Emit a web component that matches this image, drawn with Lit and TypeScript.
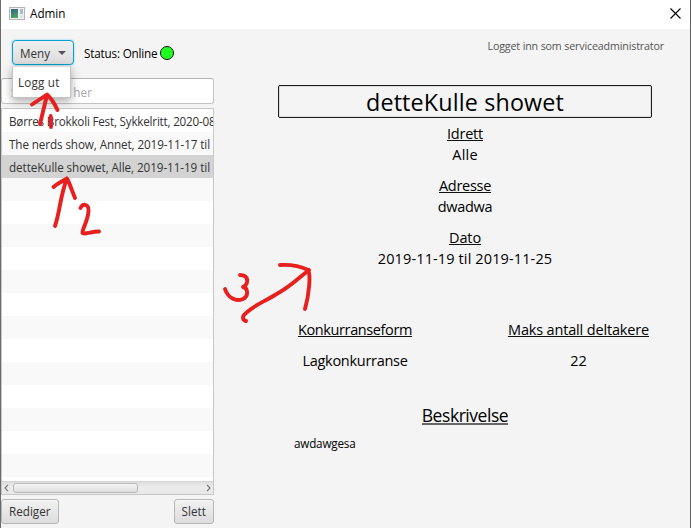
import { LitElement, html, css } from "lit";
import { customElement, property } from "lit/decorators.js";

/* A single line of text whose tracking is adjusted to fill a given width. */
@customElement("fit-label")
class FitLabel extends LitElement {
  @property({ type: Number }) w = 0;
  @property() text = "";
  static styles = css`
    :host { display: block; white-space: pre; flex: none; }
    .t { display: inline-block; vertical-align: top; }
  `;
  updated() {
    const t = this.renderRoot.querySelector(".t") as HTMLElement;
    t.style.letterSpacing = "0px";
    const natural = t.getBoundingClientRect().width;
    t.style.letterSpacing = (this.w - natural) / this.text.length + "px";
  }
  render() {
    return html`<span class="t">${this.text}</span>`;
  }
}

const rows = [
  { text: "Børres Brokkoli Fest, Sykkelritt, 2020-08", w: 206.5 },
  { text: "The nerds show, Annet, 2019-11-17 til", w: 201 },
  { text: "detteKulle showet, Alle, 2019-11-19 til", w: 201, selected: true },
  ...Array.from({ length: 14 }, () => ({ text: "", w: 0 })),
] as { text: string; w: number; selected?: boolean }[];

const facts = [
  { name: "Idrett", nw: 36, value: "Alle", vw: 25.5 },
  { name: "Adresse", nw: 52, value: "dwadwa", vw: 54.5 },
  { name: "Dato", nw: 32, value: "2019-11-19 til 2019-11-25", vw: 174.5 },
];

@customElement("app-root")
class AppRoot extends LitElement {
  static styles = css`
    :host {
      display: block; position: relative; width: 691px; height: 528px; overflow: hidden;
      font-family: "Open Sans", "Noto Sans", sans-serif; font-size: 11.7px; color: #333;
      background: #f4f4f4;
    }
    * { box-sizing: border-box; }
    .window { display: flex; flex-direction: column; height: 528px; border-left: 1px solid #6b6b6b; border-right: 1px solid #5e5e5e; }
    .titlebar { height: 29px; flex: none; background: #fff; display: flex; align-items: center; padding: 0 9px 2px 8px; color: #000; line-height: 18px; }
    .titlebar svg { display: block; }
    .titlebar fit-label { margin: -1px 0 0 5px; }
    .close { margin-left: auto; }
    .body { display: flex; flex: 1; min-height: 0; }
    .left { width: 213px; display: flex; flex-direction: column; }
    .toolbar { height: 49px; flex: none; padding: 11px 0 0 11px; display: flex; align-items: flex-start; }
    .menu { position: relative; width: 62px; height: 25px; border: 1.5px solid #0a9fd1; border-radius: 4px; background: linear-gradient(#f0f0f0, #dcdcdc); display: flex; align-items: center; padding: 0 0 0 7px; box-shadow: 0 0 2px #5fbde0; }
    .caret { margin-left: 8px; border: 4px solid transparent; border-top-color: #555; border-bottom: 0; }
    .popup { position: absolute; z-index: 2; left: -1px; top: 25px; width: 59px; height: 32px; background: #fff; border: 1px solid #c2c2c2; border-top-color: #ddd; padding: 7px 0 0 5px; line-height: 17px; box-shadow: 0 3px 9px rgba(0,0,0,.35); }
    .status { margin: 5px 0 0 10px; line-height: 17px; color: #000; }
    .dot { width: 14px; height: 14px; margin: 6px 0 0 2.500px; border-radius: 50%; background: #1fff1f; border: 1px solid #111; }
    .search { height: 26px; flex: none; background: #fff; border: 1px solid #c3c3c3; border-top-color: #b5b5b5; border-radius: 3px; padding: 4px 9px; line-height: 18px; color: #aaa; }
    .list { margin-top: 4px; height: 387px; flex: none; border: 1px solid #c8c8c8; background: #fff; overflow: hidden; display: flex; flex-direction: column; }
    .rows { height: 372px; overflow: hidden; }
    .row { height: 23px; padding: 3px 0 0 7px; line-height: 18px; }
    .row:nth-child(even) { background: #f9f9f9; }
    .row.selected { background: #d3d3d3; }
    .scroll { flex: 1; display: flex; align-items: center; border-top: 1px solid #d5d5d5; background: linear-gradient(#dedede, #ebebeb 40%, #e8e8e8); padding: 0 2px; }
    .thumb { width: 125px; height: 10px; margin: 0 auto 0 4px; border: 1px solid #b9b9b9; border-radius: 3px; background: linear-gradient(#f4f4f4, #dedede); }
    .buttons { display: flex; justify-content: space-between; padding-top: 4px; }
    .btn { height: 25px; border: 1px solid #b6b6b6; border-radius: 3px; background: linear-gradient(#f2f2f2, #dcdcdc); box-shadow: inset 0 1px #fafafa; padding: 3px 7px; line-height: 17px; }
    .right { flex: 1; display: flex; flex-direction: column; align-items: center; color: #000; font-size: 14.5px; line-height: 20px; }
    .login { align-self: flex-end; margin: 9px 26px 0 0; height: 16px; font-size: 10.7px; line-height: 16px; color: #555; }
    .title { width: 374px; height: 33px; margin: 31px 0 0 26px; border: 1px solid #1d1d1d; border-radius: 2px; box-shadow: inset 0 0 0 1px #ddd; display: flex; justify-content: center; line-height: 32px; font-size: 23.3px; }
    .facts { margin: 6px 0 0 26px; display: flex; flex-direction: column; gap: 10px; }
    .fact { display: flex; flex-direction: column; align-items: center; }
    .fact fit-label { height: 21px; }
    .u { display: flex; height: 21px; position: relative; }
    .u::after { content: ""; position: absolute; left: 0; right: 0; top: 16px; height: 1px; background: #111; }
    .cols { width: 374px; margin: 50px 0 0 26px; display: grid; grid-template-columns: 154px 147px; justify-content: space-between; }
    .cols > div { display: flex; flex-direction: column; align-items: center; gap: 10px; }
    .desc { margin: 32px 0 0 26px; font-size: 17.5px; line-height: 24px; height: 26px; }
    .desc.u::after { top: 20px; height: 2px; background: #666; }
    .note { align-self: flex-start; margin: 5px 0 0 80px; font-size: 11.7px; line-height: 18px; }
    .ink { position: absolute; inset: 0; z-index: 3; pointer-events: none; fill: none; stroke: #e81f1f; stroke-width: 3.9; stroke-linecap: round; stroke-linejoin: round; }
  `;
  render() {
    return html`
      <div class="window">
        <div class="titlebar">
          <svg width="16" height="13" viewBox="0 0 16 13">
            <defs><linearGradient id="g" x2=".4" y2="1"><stop stop-color="#315f86"/><stop offset="1" stop-color="#4ea267"/></linearGradient></defs>
            <rect x=".5" y=".5" width="15" height="12" fill="#f1f1f1" stroke="#b0b4b8"/>
            <rect x="2" y="2" width="7" height="9" fill="url(#g)"/>
            <rect x="11" y="2" width="3" height="5" fill="#a9bccb"/><rect x="11" y="8" width="3" height="3" fill="#dde2e6"/>
          </svg>
          <fit-label .w=${35.5} text="Admin"></fit-label>
          <svg class="close" width="11" height="11" viewBox="0 0 11 11"><path d="M.5.5l10 10M10.5.5l-10 10" stroke="#000" stroke-width="1.1"/></svg>
        </div>
        <div class="body">
          <div class="left">
            <div class="toolbar">
              <div class="menu">
                <fit-label .w=${30} text="Meny"></fit-label><span class="caret"></span>
                <div class="popup"><fit-label .w=${41.5} text="Logg ut"></fit-label></div>
              </div>
              <fit-label class="status" .w=${73.5} text="Status: Online"></fit-label>
              <span class="dot"></span>
            </div>
            <div class="search"><fit-label .w=${81} text="Søk i listen her"></fit-label></div>
            <div class="list">
              <div class="rows">
                ${rows.map((r) => html`<div class="row ${r.selected ? "selected" : ""}">${r.text ? html`<fit-label .w=${r.w} .text=${r.text}></fit-label>` : ""}</div>`)}
              </div>
              <div class="scroll">
                <svg width="5" height="8" viewBox="0 0 5 8"><path d="M4 .8L1 4l3 3.2" fill="none" stroke="#777" stroke-width="1.2"/></svg>
                <span class="thumb"></span>
                <svg width="5" height="8" viewBox="0 0 5 8"><path d="M1 .8L4 4 1 7.2" fill="none" stroke="#777" stroke-width="1.2"/></svg>
              </div>
            </div>
            <div class="buttons">
              <div class="btn"><fit-label .w=${41.5} text="Rediger"></fit-label></div>
              <div class="btn"><fit-label .w=${24.5} text="Slett"></fit-label></div>
            </div>
          </div>
          <div class="right">
            <fit-label class="login" .w=${176.5} text="Logget inn som serviceadministrator"></fit-label>
            <div class="title"><fit-label .w=${198} text="detteKulle showet"></fit-label></div>
            <div class="facts">
              ${facts.map((f) => html`<div class="fact">
                <div class="u"><fit-label .w=${f.nw} .text=${f.name}></fit-label></div>
                <fit-label .w=${f.vw} .text=${f.value}></fit-label>
              </div>`)}
            </div>
            <div class="cols">
              <div><div class="u"><fit-label .w=${114} text="Konkurranseform"></fit-label></div><fit-label .w=${105} text="Lagkonkurranse"></fit-label></div>
              <div><div class="u"><fit-label .w=${141} text="Maks antall deltakere"></fit-label></div><fit-label .w=${16.5} text="22"></fit-label></div>
            </div>
            <div class="desc u"><fit-label .w=${86.5} text="Beskrivelse"></fit-label></div>
            <fit-label class="note" .w=${61.5} text="awdawgesa"></fit-label>
          </div>
        </div>
      </div>
      <svg class="ink" width="691" height="528" viewBox="0 0 691 528">
        <path d="M40 124L47 95M32 104.500L47 94.500Q53 100 57.500 110M50.700 116L51 127"/>
        <path d="M55 226C60 212 60 196 67 178.500M53.500 187C58 183 63 181 67 178.500C70 184 72 191 75 198"/>
        <path d="M80.500 208C83 203 89 204 88.500 211C88 221 82 229 82.500 233C86 235 92 231 99 231.500"/>
        <path d="M225 289C228 298 236 302 243 299C249 296 248 288 243 287C249 284 249 275 240 275"/>
        <path d="M246 321C242 320 242 316 246 313C256 304 262 303 275 295C290 287 295 281 309 270M280 265C290 264.500 300 266 308 270C311 275 309 295 305 309"/>
      </svg>
    `;
  }
}
